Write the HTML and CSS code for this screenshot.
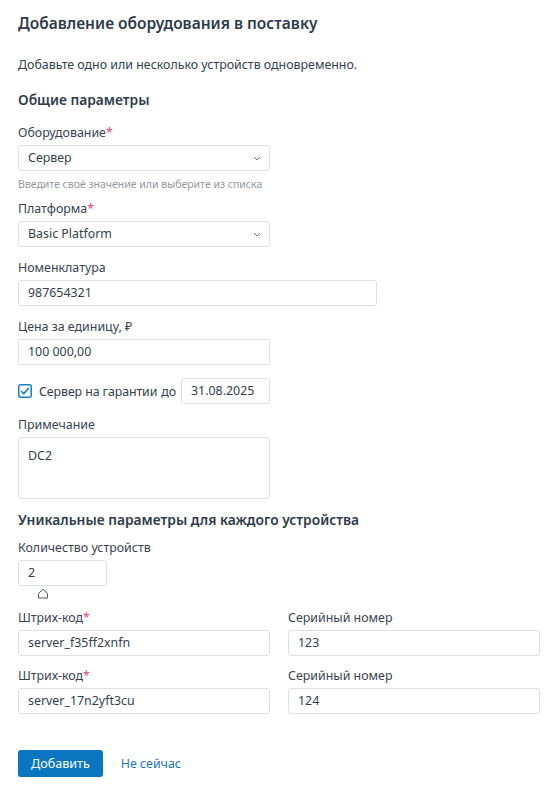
FILE: index.html
```html
<!DOCTYPE html>
<html lang="ru">
<head>
<meta charset="utf-8">
<link rel="stylesheet" href="styles.css">
</head>
<body>
<div class="page">
  <h1 class="title">Добавление оборудования в поставку</h1>
  <p class="lead">Добавьте одно или несколько устройств одновременно.</p>
  <h2 class="section">Общие параметры</h2>

  <div class="field first">
    <div class="label">Оборудование<span class="req">*</span></div>
    <div class="control select w252"><span>Сервер</span>
      <svg class="chev" width="8" height="5" viewBox="0 0 8 5"><path d="M1 1l3 3 3-3" fill="none" stroke="#6b7785" stroke-width="1"/></svg>
    </div>
    <div class="hint">Введите своё значение или выберите из списка</div>
  </div>

  <div class="field">
    <div class="label">Платформа<span class="req">*</span></div>
    <div class="control select w252"><span>Basic Platform</span>
      <svg class="chev" width="8" height="5" viewBox="0 0 8 5"><path d="M1 1l3 3 3-3" fill="none" stroke="#6b7785" stroke-width="1"/></svg>
    </div>
  </div>

  <div class="field">
    <div class="label">Номенклатура</div>
    <div class="control w359">987654321</div>
  </div>

  <div class="field">
    <div class="label">Цена за единицу, ₽</div>
    <div class="control w252">100 000,00</div>
  </div>

  <div class="check-row">
    <span class="checkbox">
      <svg width="14" height="14" viewBox="0 0 14 14"><rect x="0.75" y="0.75" width="12.5" height="12.5" rx="2" fill="#fff" stroke="#1a7fc4" stroke-width="1.5"/><path d="M3.2 7.2l2.6 2.6 5-6" fill="none" stroke="#1a7fc4" stroke-width="1.7"/></svg>
    </span>
    <span class="check-text">Сервер на гарантии</span>
    <span class="check-text">до</span>
    <div class="control date">31.08.2025</div>
  </div>

  <div class="field">
    <div class="label">Примечание</div>
    <div class="control textarea w252">DC2</div>
  </div>

  <h2 class="section section2">Уникальные параметры для каждого устройства</h2>

  <div class="field count">
    <div class="label">Количество устройств</div>
    <div class="control w89">2</div>
    <svg class="thumb" width="12" height="11" viewBox="0 0 12 11"><path d="M1.5 10V5.5L6 1.2l4.5 4.3V10z" fill="#fff" stroke="#4a5663" stroke-width="1"/></svg>
  </div>

  <div class="grid">
    <div class="cell">
      <div class="label">Штрих-код<span class="req">*</span></div>
      <div class="control">server_f35ff2xnfn</div>
    </div>
    <div class="cell">
      <div class="label">Серийный номер</div>
      <div class="control">123</div>
    </div>
    <div class="cell">
      <div class="label">Штрих-код<span class="req">*</span></div>
      <div class="control">server_17n2yft3cu</div>
    </div>
    <div class="cell">
      <div class="label">Серийный номер</div>
      <div class="control">124</div>
    </div>
  </div>

  <div class="actions">
    <button class="btn">Добавить</button>
    <a class="link">Не сейчас</a>
  </div>
</div>
</body>
</html>
```
FILE: styles.css
```css
* { box-sizing: border-box; }
html, body { margin: 0; padding: 0; background: #fff; }
body {
  font-family: "Noto Sans", "Open Sans", sans-serif;
  color: #333f4c;
  font-size: 12.4px;
}
.page { padding: 0 18px; }
.title {
  margin: 0;
  padding-top: 12px;
  font-size: 15.5px;
  font-weight: 600;
  line-height: 22px;
  color: #2e3b49;
}
.lead { margin: 22px 0 0; line-height: 18px; }
.section {
  margin: 16px 0 0;
  font-size: 13.8px;
  font-weight: 600;
  line-height: 20px;
  color: #2e3b49;
}
.section2 { margin-top: 11px; }
.field { margin-top: 12px; display: flex; flex-direction: column; align-items: flex-start; }
.field.first { margin-top: 14px; }
.field.count { margin-top: 9px; }
.label { line-height: 17px; margin-bottom: 4px; color: #38434f; }
.req { color: #e0457b; }
.control {
  height: 26px;
  border: 1px solid #dde1e5;
  border-radius: 3px;
  padding: 0 9px;
  display: flex;
  align-items: center;
  line-height: 16px;
  color: #333f4c;
  background: #fff;
}
.w252 { width: 252px; }
.w359 { width: 359px; }
.w89 { width: 89px; }
.select { justify-content: space-between; padding-right: 8px; }
.chev { flex: none; }
.hint { margin-top: 6px; margin-bottom: -3px; font-size: 10.5px; line-height: 14px; color: #9098a1; }
.check-row {
  margin-top: 13px;
  display: flex;
  align-items: center;
  gap: 4px;
}
.checkbox { display: flex; width: 14px; height: 14px; margin-right: 3px; }
.check-text { letter-spacing: -0.1px; }
.date { width: 89px; margin-left: 1px; }
.textarea { height: 62px; align-items: flex-start; padding-top: 10px; }
.thumb { margin-left: 19px; margin-top: 2px; }
.grid {
  margin-top: 10px;
  display: grid;
  grid-template-columns: 252px 252px;
  column-gap: 18px;
  row-gap: 11px;
}
.cell .label { margin-bottom: 4px; }
.cell .control { width: 100%; }
.actions {
  margin-top: 36px;
  display: flex;
  align-items: center;
  gap: 18px;
}
.btn {
  font: inherit;
  font-size: 12.6px;
  height: 27px;
  padding: 0 13px;
  border: 0;
  border-radius: 3px;
  background: #0a76c0;
  color: #fff;
  box-shadow: 0 1px 2px rgba(0,0,0,0.15);
}
.link { color: #1a74bb; }
```
